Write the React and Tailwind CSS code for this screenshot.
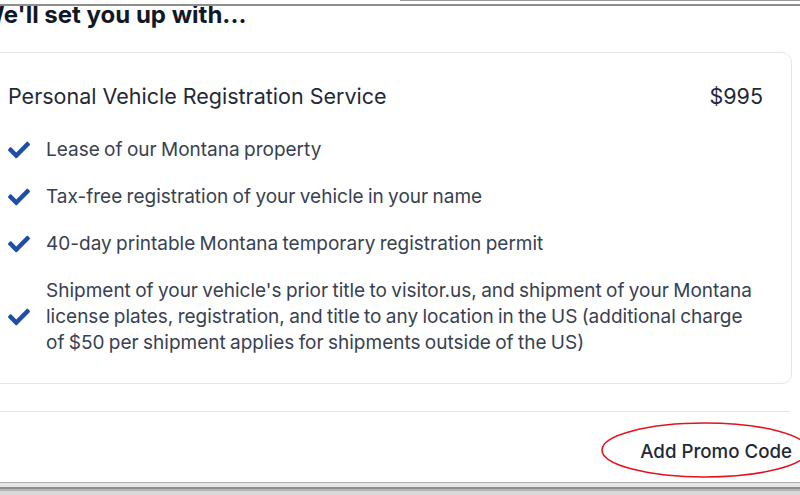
import React from "react";

function Check() {
  return (
    <svg viewBox="0 0 512 512" className="w-[22px] h-[22px] shrink-0" fill="#1f4ea6">
      <path d="M173.898 439.404l-166.4-166.4c-9.997-9.997-9.997-26.206 0-36.204l36.203-36.204c9.997-9.998 26.207-9.998 36.204 0L192 312.69 432.095 72.596c9.997-9.997 26.207-9.997 36.204 0l36.203 36.204c9.997 9.997 9.997 26.206 0 36.204l-294.4 294.401c-9.998 9.997-26.207 9.997-36.204-.001z" />
    </svg>
  );
}

const items = [
  "Lease of our Montana property",
  "Tax-free registration of your vehicle in your name",
  "40-day printable Montana temporary registration permit",
  "Shipment of your vehicle's prior title to visitor.us, and shipment of your Montana license plates, registration, and title to any location in the US (additional charge of $50 per shipment applies for shipments outside of the US)",
];

export default function App() {
  return (
    <div className="relative w-[800px] h-[495px] overflow-hidden bg-white font-['Inter',sans-serif]">
      <div className="ml-[-21px] w-[813px]">
        <h2 className="ml-[1px] pt-[2px] text-[24px] leading-[26px] font-bold text-[#111827]">We'll set you up with...</h2>
        <div className="mt-[24px] rounded-[10px] border border-[#e3e6ea] px-7 pt-[29px] pb-[27px]">
          <div className="flex items-center justify-between text-[21.5px] leading-[28px] text-[#1f2937]">
            <span>Personal Vehicle Registration Service</span>
            <span>$995</span>
          </div>
          <ul className="mt-[27px] flex flex-col gap-[21px]">
            {items.map((t, i) => (
              <li key={i} className="flex items-center gap-[16px]">
                <Check />
                <span className="text-[19px] leading-[26px] [word-spacing:-1px] text-[#374151] pr-[2px]">{t}</span>
              </li>
            ))}
          </ul>
        </div>
        <div className="mt-[27px] mr-[2px] h-px bg-[#e3e6ea]" />
        <div className="mt-[28px] flex justify-end">
          <span className="text-[18.7px] leading-[24px] font-medium text-[#1f2937]">Add Promo Code</span>
        </div>
      </div>

      <svg className="absolute left-[598px] top-[419px] w-[216px] h-[62px]" viewBox="0 0 216 62" fill="none">
        <ellipse cx="107" cy="31" rx="103" ry="27" stroke="#e3141b" strokeWidth="1.6" />
      </svg>

      <div className="absolute right-0 top-0 w-[400px] h-px bg-[#9a9a9a]" />
      <div className="absolute left-0 top-[4px] w-full h-[1.5px] bg-[#8f8f8f]" />
      <div className="absolute left-0 bottom-0 w-full h-[13px] flex flex-col">
        <div className="h-px bg-[#b0b0b0]" />
        <div className="h-[4px] bg-[#e6e6e6]" />
        <div className="h-[2px] bg-[#8c8c8c]" />
        <div className="h-[2px] bg-[#b5b5b5]" />
        <div className="h-[4px] bg-[#d8d8d8]" />
      </div>
    </div>
  );
}
